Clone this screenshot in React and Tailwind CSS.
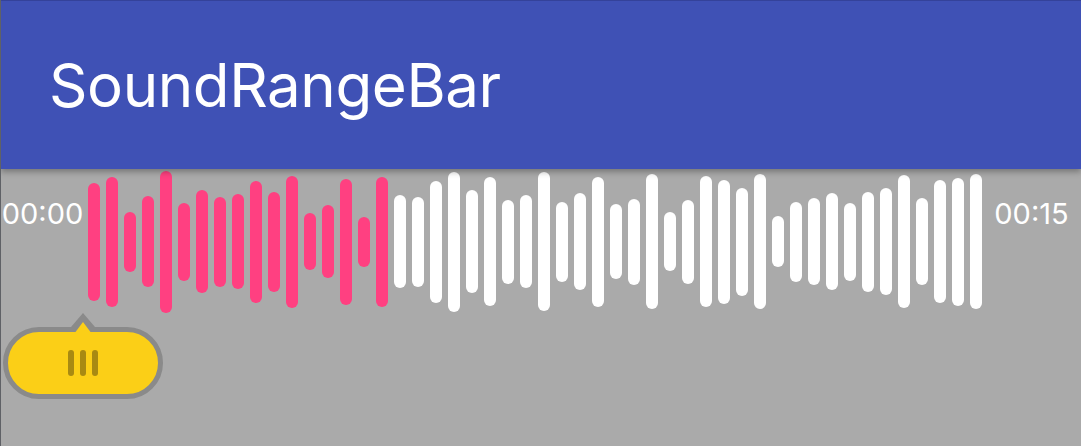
import React from 'react'

// bar heights in px, left to right; first 17 are the selected range
const bars = [
  118, 130, 60, 91, 142, 78, 103, 90, 95, 122, 100, 132, 57, 73, 126, 50, 130,
  93, 90, 122, 140, 103, 129, 84, 93, 139, 80, 97, 130, 75, 86, 135, 59, 84,
  131, 124, 108, 135, 51, 80, 87, 97, 78, 100, 107, 133, 87, 123, 128, 135,
]
const SELECTED = 17

function Thumb() {
  return (
    <div className="relative ml-[2px] w-[160px] h-[72px] rounded-full border-[5px] border-[#8a8a8a] bg-[#fbcf17] flex items-center justify-center gap-[6px]">
      <svg className="absolute left-[60px] top-[-19px]" width="30" height="22" viewBox="0 0 30 22">
        <polygon points="15,0 3,14 27,14" fill="#8a8a8a" />
        <polygon points="15,9 6,21 24,21" fill="#fbcf17" />
      </svg>
      <div className="w-[6px] h-[26px] rounded-full bg-[#a88a12]" />
      <div className="w-[6px] h-[26px] rounded-full bg-[#a88a12]" />
      <div className="w-[6px] h-[26px] rounded-full bg-[#a88a12]" />
    </div>
  )
}

export default function App() {
  return (
    <div className="w-[1081px] h-[446px] overflow-hidden bg-[#aaaaaa] border-l border-[#5f6166] font-['Inter',sans-serif]">
      <header className="relative z-10 h-[169px] bg-[#3f51b5] border-t border-[#34429a] flex items-center pl-[48px] shadow-[0_3px_6px_rgba(0,0,0,0.3)]">
        <h1 className="text-[60px] text-white leading-none tracking-[-0.4px]">SoundRangeBar</h1>
      </header>

      <div className="flex items-center h-[145px]">
        <div className="w-[87px] pr-[4px] self-start mt-[30px] text-center text-white text-[29px] leading-none">00:00</div>
        <div className="flex items-center gap-[6px]">
          {bars.map((h, i) => (
            <div
              key={i}
              className={`w-[12px] rounded-full ${i < SELECTED ? 'bg-[#ff4081]' : 'bg-white'}`}
              style={{ height: h }}
            />
          ))}
        </div>
        <div className="flex-1 self-start mt-[30px] text-center text-white text-[29px] leading-none">00:15</div>
      </div>

      <div className="mt-[13px]">
        <Thumb />
      </div>
    </div>
  )
}
